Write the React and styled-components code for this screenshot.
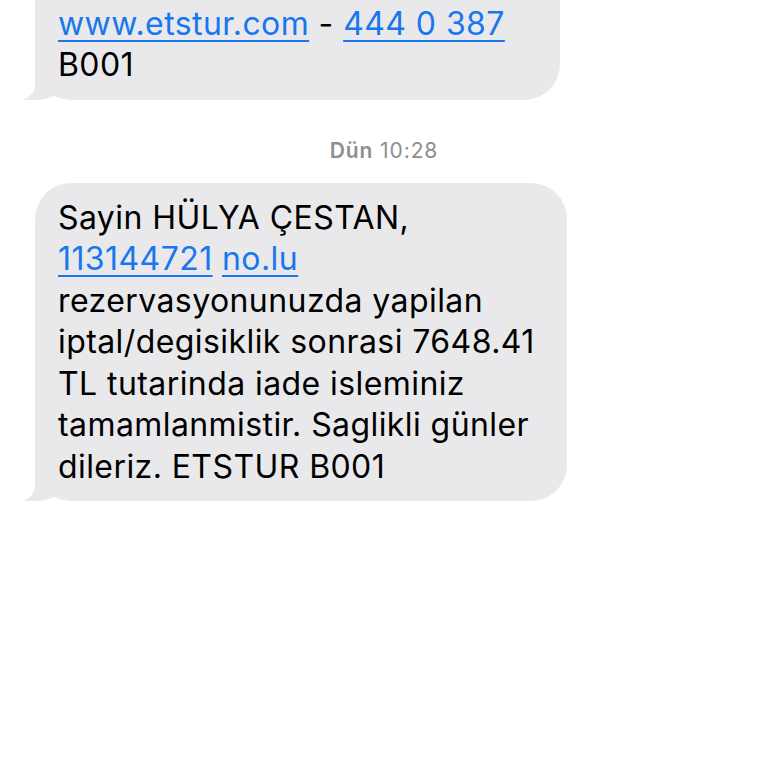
import React from "react";
import styled, { createGlobalStyle } from "styled-components";

const Global = createGlobalStyle`
  html, body { margin: 0; padding: 0; background: #ffffff; }
  body { font-family: Inter, "Noto Sans", sans-serif; -webkit-font-smoothing: antialiased; }
`;

const Screen = styled.div`
  width: 768px;
  height: 768px;
  overflow: hidden;
  display: flex;
  flex-direction: column;
  padding-left: 35px;
  box-sizing: border-box;
`;

const Bubble = styled.div`
  position: relative;
  z-index: 0;
  box-sizing: border-box;
  width: ${(p) => p.$width}px;
  margin-top: ${(p) => p.$top || 0}px;
  padding: 14px 20px 14px 23px;
  background: #e9e9eb;
  border-radius: 36px;
  color: #000;
  font-size: 32px;
  line-height: 41.5px;
  letter-spacing: 0.42px;

  &::before {
    content: "";
    position: absolute;
    z-index: -1;
    left: -12px;
    bottom: 0;
    width: 44px;
    height: 40px;
    background: #e9e9eb;
    border-bottom-right-radius: 30px 26px;
  }
  &::after {
    content: "";
    position: absolute;
    z-index: -1;
    left: -34px;
    bottom: 0;
    width: 34px;
    height: 40px;
    background: #ffffff;
    border-bottom-right-radius: 16px 15px;
  }
`;

const Line = styled.div`
  white-space: nowrap;
`;

const Link = styled.span`
  color: #1877ee;
  text-decoration: underline;
  text-decoration-thickness: 2px;
  text-underline-offset: 5px;
`;

const Stamp = styled.div`
  align-self: center;
  margin: 38px 0 20px -35px;
  font-size: 21px;
  line-height: 25px;
  letter-spacing: 0.9px;
  color: #8e8e93;
`;

const StampDay = styled.span`
  font-weight: 600;
`;

export default function App() {
  return (
    <>
      <Global />
      <Screen>
        <Bubble $width={525} $top={-53}>
          <Line>tarafınıza ulaşacaktır. Bilgi için:</Line>
          <Line>
            <Link>www.etstur.com</Link> - <Link>444 0 387</Link>
          </Line>
          <Line>B001</Line>
        </Bubble>
        <Stamp>
          <StampDay>Dün</StampDay> 10:28
        </Stamp>
        <Bubble $width={532}>
          <Line>Sayin HÜLYA ÇESTAN,</Line>
          <Line>
            <Link>113144721</Link> <Link>no.lu</Link>
          </Line>
          <Line>rezervasyonunuzda yapilan</Line>
          <Line>iptal/degisiklik sonrasi 7648.41</Line>
          <Line>TL tutarinda iade isleminiz</Line>
          <Line>tamamlanmistir. Saglikli günler</Line>
          <Line>dileriz. ETSTUR B001</Line>
        </Bubble>
      </Screen>
    </>
  );
}
